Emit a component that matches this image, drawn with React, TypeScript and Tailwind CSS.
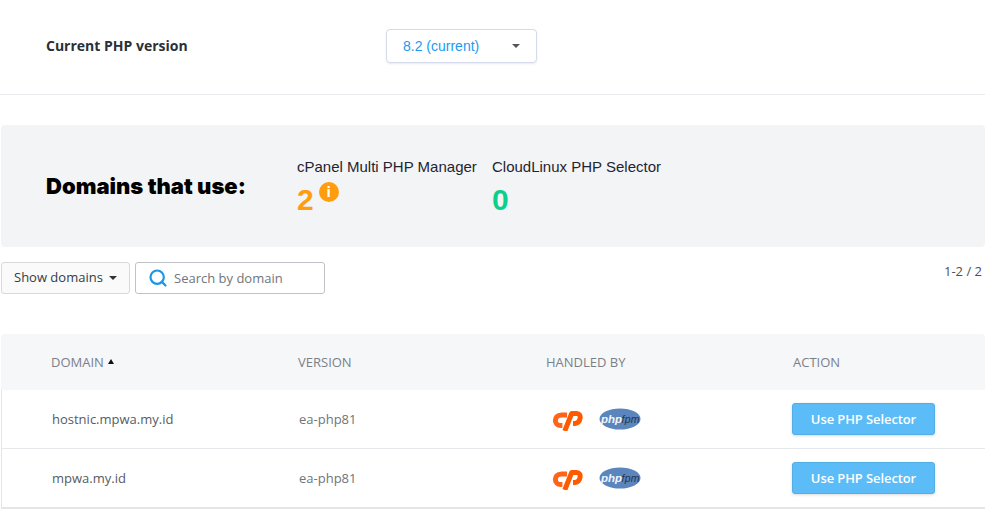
import { Search } from 'lucide-react';

const rows = [
  { domain: 'hostnic.mpwa.my.id', version: 'ea-php81' },
  { domain: 'mpwa.my.id', version: 'ea-php81' },
];

function CpanelLogo() {
  return (
    <svg width="32" height="24" viewBox="0 0 32 24" fill="none">
      <path d="M16 8H10.6C6 8 4.4 10.8 4.4 13.4C4.4 16 6.4 18.6 9.8 18.6H11.4" stroke="#ff6418" strokeWidth="5" />
      <path d="M13.8 24L20.6 6.6H25.6C28.6 6.6 29.6 8.8 29 11.6C28.4 14.6 26.4 16.6 23.6 16.6H22" stroke="#ff5a00" strokeWidth="5" strokeLinejoin="round" />
    </svg>
  );
}

function PhpFpmLogo() {
  return (
    <svg width="42" height="22" viewBox="0 0 42 22">
      <ellipse cx="21" cy="11" rx="20.5" ry="10.5" fill="#5a85bd" />
      <text x="2" y="14.5" fontFamily="'Liberation Sans', sans-serif" fontSize="11.5" fontWeight="700" fontStyle="italic" fill="#f0f4fa">php</text>
      <text x="22.5" y="14.5" fontFamily="'Liberation Sans', sans-serif" fontSize="10.5" fontStyle="italic" letterSpacing="0.3" fill="#26344a">fpm</text>
    </svg>
  );
}

export default function App() {
  return (
    <div className="w-[985px] h-[520px] overflow-hidden bg-white font-['Open_Sans',sans-serif] text-[13px]">
      {/* PHP version */}
      <div className="h-[95px] border-b border-[#e9ebee] flex items-start pt-[29px] pl-[46px]">
        <div className="w-[340px] pt-[7px] text-[14px] leading-[20px] font-bold text-[#2b2f38]">Current PHP version</div>
        <div className="w-[151px] h-[34px] rounded border border-[#d5daec] shadow-[0_1px_2px_rgba(60,70,120,0.12)] flex items-center justify-between pl-[16px] pr-[16px] font-['Liberation_Sans',sans-serif] text-[14px] text-[#1a9bf0]">
          <span>8.2 (current)</span>
          <span className="w-0 h-0 border-x-[4px] border-x-transparent border-t-[4px] border-t-[#555]" />
        </div>
      </div>

      {/* Counters */}
      <div className="mt-[30px] h-[122px] ml-[1px] bg-[#f3f4f6] rounded flex items-start pl-[45px] font-['Liberation_Sans',sans-serif]">
        <div className="w-[251px] pt-[47px] font-['Inter',sans-serif] text-[22px] leading-[28px] font-black text-black">Domains that use:</div>
        <div className="w-[195px] pt-[33px]">
          <div className="text-[15px] leading-[18px] text-[#1f2530]">cPanel Multi PHP Manager</div>
          <div className="flex items-start">
            <span className="mt-[7px] text-[30px] leading-[34px] font-bold text-[#ff9d0f]">2</span>
            <span className="ml-[5px] mt-[6px] w-[20px] h-[20px] rounded-full bg-[#ff9d0f] flex items-center justify-center font-['Open_Sans',sans-serif] text-[14px] font-bold leading-none text-white">i</span>
          </div>
        </div>
        <div className="pt-[33px]">
          <div className="text-[15px] leading-[18px] text-[#1f2530]">CloudLinux PHP Selector</div>
          <div className="mt-[7px] text-[30px] leading-[34px] font-bold text-[#0ccf8d]">0</div>
        </div>
      </div>

      {/* Toolbar */}
      <div className="mt-[15px] ml-[1px] flex items-start">
        <div className="w-[129px] h-[32px] rounded-[3px] border border-[#d9d9d9] bg-[#fafafa] flex items-center pl-[12px] text-[#333c46]">
          <span>Show domains</span>
          <span className="ml-[6px] w-0 h-0 border-x-[4px] border-x-transparent border-t-[4px] border-t-[#333]" />
        </div>
        <div className="ml-[5px] w-[190px] h-[32px] rounded-[3px] border border-[#bfc3c8] flex items-center pl-[12px] text-[#70757b]">
          <Search size={20} strokeWidth={2.6} className="text-[#1a96e6]" />
          <span className="ml-[6px] pt-px">Search by domain</span>
        </div>
        <div className="ml-auto pr-[3px] leading-[18px] text-[#4a5058]">1-2 / 2</div>
      </div>

      {/* Table */}
      <div className="mt-[40px] ml-[1px]">
        <div className="h-[56px] rounded-t bg-[#f6f7f9] flex items-center pt-px text-[13px] text-[#7b8087]">
          <div className="w-[297px] pl-[50px] flex items-center">
            DOMAIN
            <span className="ml-[4px] mb-[2px] w-0 h-0 border-x-[3.5px] border-x-transparent border-b-[5px] border-b-[#111]" />
          </div>
          <div className="w-[248px]">VERSION</div>
          <div className="w-[247px]">HANDLED BY</div>
          <div>ACTION</div>
        </div>
        <div className="border-l border-b-2 border-[#e3e5e8]">
          {rows.map((row, i) => (
            <div key={row.domain} className={i === 0 ? 'h-[59px] flex items-center border-b border-[#e6e8eb]' : 'h-[58px] flex items-center'}>
              <div className="w-[297px] pl-[50px] pt-px text-[#565c64]">{row.domain}</div>
              <div className="w-[247px] pt-px text-[#70757b]">{row.version}</div>
              <div className="w-[246px] flex items-center pl-[5px] gap-[16px]">
                <CpanelLogo />
                <PhpFpmLogo />
              </div>
              <button className="w-[143px] h-[32px] pt-px rounded-[3px] bg-[#5bbcf7] border border-[#54aee6] shadow-[0_1px_3px_rgba(0,0,0,0.15)] text-white font-semibold text-[13px] tracking-[-0.1px]">
                Use PHP Selector
              </button>
            </div>
          ))}
        </div>
      </div>
    </div>
  );
}
